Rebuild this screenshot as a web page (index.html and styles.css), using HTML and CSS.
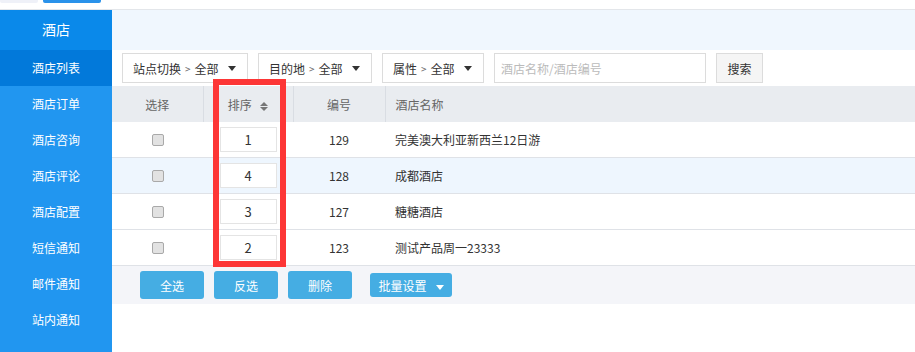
FILE: index.html
```html
<!DOCTYPE html>
<html lang="zh-CN">

<head>
    <title>酒店列表</title>
    <meta charset="UTF-8">
    <meta name="viewport" content="width=device-width, initial-scale=1">
    <link rel="stylesheet" href="styles.css">
</head>

<body>
    <div class="topbar">
        <span class="top-tab"></span>
        <span class="top-tab top-tab-on"></span>
    </div>
    <div class="layout">
        <div class="sidebar">
            <div class="side-title">酒店</div>
            <div class="side-item active">酒店列表</div>
            <div class="side-item">酒店订单</div>
            <div class="side-item">酒店咨询</div>
            <div class="side-item">酒店评论</div>
            <div class="side-item">酒店配置</div>
            <div class="side-item">短信通知</div>
            <div class="side-item">邮件通知</div>
            <div class="side-item">站内通知</div>
        </div>
        <div class="main">
            <div class="banner"></div>
            <div class="toolbar">
                <div class="drop drop-site">站点切换<span class="gt">&gt;</span>全部<span class="caret"></span></div>
                <div class="drop drop-dest">目的地<span class="gt">&gt;</span>全部<span class="caret"></span></div>
                <div class="drop drop-attr">属性<span class="gt">&gt;</span>全部<span class="caret"></span></div>
                <input class="search" type="text" placeholder="酒店名称/酒店编号">
                <button class="search-btn">搜索</button>
            </div>
            <div class="table-wrap">
                <table class="list">
                    <colgroup>
                        <col class="w-sel">
                        <col class="w-sort">
                        <col class="w-no">
                        <col>
                    </colgroup>
                    <thead>
                        <tr>
                            <th>选择</th>
                            <th>排序 <span class="sort-icon"><i class="up"></i><i class="down"></i></span></th>
                            <th>编号</th>
                            <th class="c-name">酒店名称</th>
                        </tr>
                    </thead>
                    <tbody>
                        <tr>
                            <td><span class="check"></span></td>
                            <td><span class="order">1</span></td>
                            <td>129</td>
                            <td class="c-name">完美澳大利亚新西兰12日游</td>
                        </tr>
                        <tr class="alt">
                            <td><span class="check"></span></td>
                            <td><span class="order">4</span></td>
                            <td>128</td>
                            <td class="c-name">成都酒店</td>
                        </tr>
                        <tr>
                            <td><span class="check"></span></td>
                            <td><span class="order">3</span></td>
                            <td>127</td>
                            <td class="c-name">糖糖酒店</td>
                        </tr>
                        <tr>
                            <td><span class="check"></span></td>
                            <td><span class="order">2</span></td>
                            <td>123</td>
                            <td class="c-name">测试产品周一23333</td>
                        </tr>
                    </tbody>
                </table>
                <div class="mark"></div>
            </div>
            <div class="actions">
                <button class="btn">全选</button>
                <button class="btn">反选</button>
                <button class="btn">删除</button>
                <button class="btn btn-batch">批量设置<span class="caret caret-white"></span></button>
            </div>
        </div>
    </div>
</body>

</html>
```

FILE: styles.css
```css
body {
    margin: 0;
    padding: 0;
    background-color: #fff;
    font-family: "Noto Sans CJK SC", "Liberation Sans", sans-serif;
    font-size: 12px;
    color: #333;
}

.topbar {
    height: 9px;
    border-bottom: 1px solid #e3e6ea;
    display: flex;
    gap: 5px;
}

.top-tab {
    display: block;
    width: 38px;
    height: 3px;
    background-color: #eff1f8;
    border-radius: 0 0 2px 2px;
}

.top-tab-on {
    width: 58px;
    background-color: #2a92ea;
}

.layout {
    display: flex;
    height: 342px;
}

.sidebar {
    width: 112px;
    flex-shrink: 0;
    background-color: #2196f0;
    color: #fff;
    font-size: 12px;
}

.side-title {
    height: 40px;
    line-height: 39px;
    text-align: center;
    font-size: 14px;
    background-color: #0a89ea;
}

.side-item {
    height: 36px;
    line-height: 36px;
    text-align: center;
}

.side-item.active {
    background-color: #0279da;
}

.main {
    flex: 1;
}

.banner {
    height: 40px;
    background-color: #f0f7fe;
}

.toolbar {
    height: 36px;
    display: flex;
    align-items: center;
    gap: 10px;
    padding-left: 10px;
}

.drop {
    box-sizing: border-box;
    height: 30px;
    border: 1px solid #dcdcdc;
    display: flex;
    align-items: center;
    padding-left: 10px;
    font-size: 12px;
    color: #333;
}

.drop-site {
    width: 126px;
}

.drop-dest {
    width: 114px;
}

.drop-attr {
    width: 102px;
}

.gt {
    font-size: 10px;
    color: #666;
    margin: 0 4px;
}

.caret {
    display: inline-block;
    width: 0;
    height: 0;
    border-left: 4px solid transparent;
    border-right: 4px solid transparent;
    border-top: 5px solid #333;
    margin-left: 9px;
}

.caret-white {
    border-top-color: #fff;
    margin-left: 9px;
    vertical-align: middle;
}

.search {
    box-sizing: border-box;
    width: 212px;
    height: 30px;
    border: 1px solid #dcdcdc;
    padding: 0 6px;
    font-family: inherit;
    font-size: 12px;
    outline: none;
}

.search::placeholder {
    color: #bbb;
}

.search-btn {
    box-sizing: border-box;
    width: 47px;
    height: 30px;
    border: 1px solid #dcdcdc;
    background-color: #f5f5f5;
    font-family: inherit;
    font-size: 12px;
    color: #333;
    padding: 0;
}

.table-wrap {
    position: relative;
}

.list {
    width: 100%;
    border-collapse: collapse;
    table-layout: fixed;
}

.w-sel {
    width: 91px;
}

.w-sort {
    width: 90px;
}

.w-no {
    width: 92px;
}

.list th {
    height: 36px;
    background-color: #e9ecf0;
    font-weight: normal;
    color: #666;
    border-left: 1px solid #d9dde3;
    padding: 0;
    text-align: center;
}

.list th:first-child {
    border-left: none;
}

.list td {
    height: 35px;
    border-bottom: 1px solid #dfe2e7;
    padding: 0;
    text-align: center;
}

.list tr.alt td {
    background-color: #eef6fe;
}

.list .c-name {
    text-align: left;
    padding-left: 10px;
}

.sort-icon {
    display: inline-flex;
    flex-direction: column;
    gap: 1px;
    vertical-align: middle;
    margin-left: 6px;
}

.sort-icon i {
    display: block;
    width: 0;
    height: 0;
    border-left: 4px solid transparent;
    border-right: 4px solid transparent;
}

.sort-icon .up {
    border-bottom: 4px solid #777;
}

.sort-icon .down {
    border-top: 4px solid #777;
}

.check {
    display: inline-block;
    box-sizing: border-box;
    width: 12px;
    height: 12px;
    border: 1px solid #a9a9a9;
    border-radius: 2px;
    background-color: #e2e2e2;
    vertical-align: middle;
    margin-bottom: 3px;
}

.order {
    display: inline-block;
    box-sizing: border-box;
    width: 57px;
    height: 25px;
    line-height: 23px;
    border: 1px solid #e4e4e4;
    background-color: #fff;
    font-size: 13px;
    vertical-align: middle;
}

.mark {
    position: absolute;
    left: 101px;
    top: -7px;
    width: 73px;
    height: 188px;
    box-sizing: border-box;
    border: 6px solid #fd3636;
}

.actions {
    height: 38px;
    background-color: #f4f5f9;
    display: flex;
    align-items: center;
    gap: 10px;
    padding-left: 28px;
}

.btn {
    width: 64px;
    height: 28px;
    border: none;
    border-radius: 3px;
    background-color: #45ade3;
    color: #fff;
    font-family: inherit;
    font-size: 12px;
    padding: 0;
}

.btn-batch {
    width: 82px;
    height: 24px;
    margin-left: 8px;
}
```
